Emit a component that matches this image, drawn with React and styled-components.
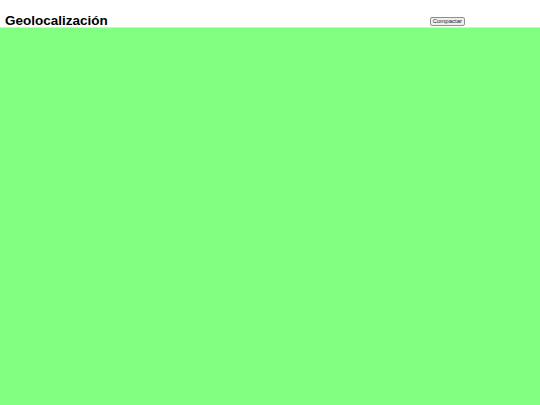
import React from 'react';
import styled, { createGlobalStyle } from 'styled-components';

const GlobalStyle = createGlobalStyle`
  html, body {
    margin: 0;
    height: 100%;
    background: #ffffff;
    font-family: "Liberation Sans", Arial, sans-serif;
  }
  #root {
    height: 100%;
  }
`;

const Page = styled.div`
  display: flex;
  flex-direction: column;
  height: 100vh;
`;

const Header = styled.header`
  display: flex;
  align-items: flex-end;
  justify-content: space-between;
  height: 27px;
  padding: 0 75px 0 5px;
  box-sizing: border-box;
`;

const Title = styled.h1`
  margin: 0;
  font-size: 13.5px;
  font-weight: bold;
  line-height: 12px;
  color: #000;
`;

const CompactButton = styled.button`
  font-family: "Liberation Sans", Arial, sans-serif;
  font-size: 6px;
  line-height: 7px;
  height: 9px;
  padding: 0 2px;
  margin-bottom: 1.5px;
  color: #222;
  background: #efefef;
  border: 1px solid #8f8f8f;
  border-radius: 2px;
`;

const MapArea = styled.main`
  flex: 1;
  background: #80ff80;
  border-top: 1px solid #d8e8d8;
`;

export default function App() {
  return (
    <>
      <GlobalStyle />
      <Page>
        <Header>
          <Title>Geolocalización</Title>
          <CompactButton>Compactar</CompactButton>
        </Header>
        <MapArea />
      </Page>
    </>
  );
}
